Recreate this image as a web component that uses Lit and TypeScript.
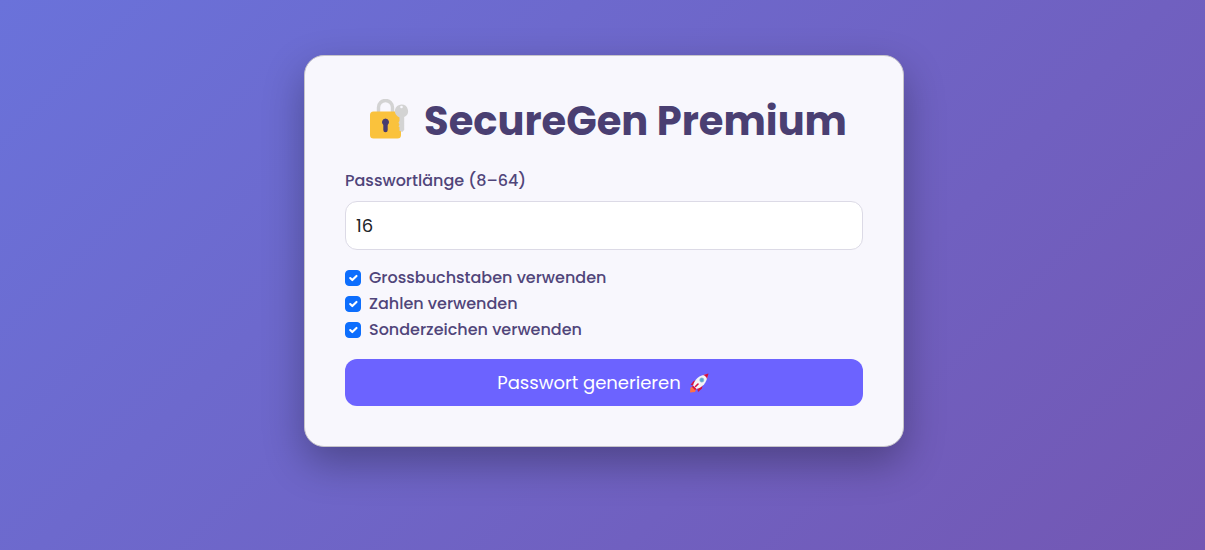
import { LitElement, html, css } from "lit";
import { customElement, state } from "lit/decorators.js";

interface Option {
  id: string;
  label: string;
  checked: boolean;
}

@customElement("app-root")
export class AppRoot extends LitElement {
  static styles = css`
    :host {
      display: block;
      font-family: Poppins, Inter, sans-serif;
      color: #4a3f72;
    }
    *,
    *::before {
      box-sizing: border-box;
    }
    .page {
      min-height: 100vh;
      padding: 55px 15px 55px 18px;
      background: linear-gradient(135deg, #6a72da, #7357b3);
    }
    .card {
      max-width: 600px;
      margin: 0 auto;
      padding: 40px;
      background: #f8f7fd;
      border: 1px solid #c6c4ca;
      border-radius: 20px;
      box-shadow: 0 16px 40px rgba(0, 0, 0, 0.3);
    }
    .title {
      display: flex;
      justify-content: center;
      align-items: center;
      gap: 15px;
      margin: 0 0 23px;
      padding-left: 8px;
      font-size: 40px;
      line-height: 50px;
      font-weight: 700;
      white-space: nowrap;
    }
    .lock {
      width: 40px;
      height: 44px;
      flex: none;
    }
    .label {
      display: block;
      margin-bottom: 8px;
      font-size: 16px;
      line-height: 24px;
      font-weight: 500;
      color: #50457a;
    }
    .input {
      display: block;
      width: 100%;
      height: 49px;
      margin: 0 0 16px;
      padding: 0 10px;
      border: 1px solid #dcdae6;
      border-radius: 12px;
      background: #fff;
      color: #212529;
      font: 400 18px/28px Poppins, Inter, sans-serif;
      appearance: textfield;
    }
    .input::-webkit-inner-spin-button {
      appearance: none;
      margin: 0;
    }
    .option {
      display: flex;
      align-items: center;
      gap: 8px;
      margin-bottom: 2px;
      font-size: 16px;
      line-height: 24px;
      font-weight: 500;
      color: #50457a;
    }
    .check {
      appearance: none;
      flex: none;
      width: 16px;
      height: 16px;
      margin: 0;
      border: 1px solid #dcdae6;
      border-radius: 4px;
      background: #fff;
    }
    .check:checked {
      border-color: #0d6efd;
      background: #0d6efd
        url("data:image/svg+xml,%3Csvg xmlns='http://www.w3.org/2000/svg' viewBox='0 0 20 20'%3E%3Cpath fill='none' stroke='%23fff' stroke-linecap='round' stroke-linejoin='round' stroke-width='3' d='m6 10 3 3 6-6'/%3E%3C/svg%3E")
        center / contain no-repeat;
    }
    .submit {
      display: flex;
      justify-content: center;
      align-items: center;
      gap: 8px;
      width: 100%;
      height: 47px;
      margin: 17px 0 0;
      padding: 0 14px 0 12px;
      border: 0;
      border-radius: 12px;
      background: #6c63ff;
      color: #fff;
      font: 400 18px/28px Poppins, Inter, sans-serif;
      cursor: pointer;
    }
    .rocket {
      width: 20px;
      height: 20px;
      flex: none;
    }
  `;

  @state() private options: Option[] = [
    { id: "upper", label: "Grossbuchstaben verwenden", checked: true },
    { id: "digits", label: "Zahlen verwenden", checked: true },
    { id: "special", label: "Sonderzeichen verwenden", checked: true },
  ];

  render() {
    return html`
      <main class="page">
        <form class="card" @submit=${(e: Event) => e.preventDefault()}>
          <h1 class="title">
            <svg class="lock" viewBox="0 0 40 44" aria-hidden="true">
              <path d="M9.500 15V8.500a7 7 0 0 1 14 0V15" fill="none" stroke="#d3d3d3" stroke-width="3.400" />
              <rect x="1" y="12.500" width="31" height="27" rx="3.500" fill="#fac23c" />
              <path
                fill="#d3d3d3"
                fill-rule="evenodd"
                d="M32.500 5.500a6.600 6.600 0 0 1 2.700 12.600v13l-2 1.800-2.700-1.200v-3.500l-1-1 1-1.500-1-2 1-2v-3.300A6.600 6.600 0 0 1 32.500 5.500Zm0 1.200a1.300 1.300 0 1 0 0 2.600 1.300 1.300 0 0 0 0-2.600Z"
              />
              <path
                fill="#473b70"
                d="M16.500 19.500a3.600 3.600 0 0 1 2.200 6.400v5.100a2.200 2.200 0 0 1-4.400 0v-5.100A3.600 3.600 0 0 1 16.500 19.500Z"
              />
            </svg>
            <span>SecureGen Premium</span>
          </h1>

          <label class="label" for="length">Passwortlänge (8–64)</label>
          <input class="input" id="length" type="number" min="8" max="64" value="16" />

          ${this.options.map(
            (o) => html`
              <div class="option">
                <input class="check" id=${o.id} type="checkbox" .checked=${o.checked} />
                <label for=${o.id}>${o.label}</label>
              </div>
            `
          )}

          <button class="submit" type="submit">
            <span>Passwort generieren</span>
            <svg class="rocket" viewBox="0 0 20 20" aria-hidden="true">
              <path d="M1.500 14.500 4 13.500l3 3-1 2.500-5 .500Z" fill="#ff7043" />
              <path d="M8 7 4.500 8 1.500 12l5 .5ZM13.500 12l-.5 3.500-4 3.500-1-4.500Z" fill="#d5103f" />
              <path d="M4 13C5 7 10 1.500 18.500 1.500c0 8-5.500 13.500-11.500 14.500Z" fill="#f3f5f8" />
              <path d="M14 2 19.500.5 18 6C17.500 4 16 2.500 14 2Z" fill="#d5103f" />
              <path d="m4 12.500 3.500 3.500-1.500 1-3-3Z" fill="#d5103f" />
              <path d="m9 11-2.500 2.500" stroke="#d5103f" stroke-width="1.600" stroke-linecap="round" />
              <circle cx="12.800" cy="7" r="2.200" fill="#58a6cf" stroke="#a9c5d8" stroke-width=".6" />
            </svg>
          </button>
        </form>
      </main>
    `;
  }
}
